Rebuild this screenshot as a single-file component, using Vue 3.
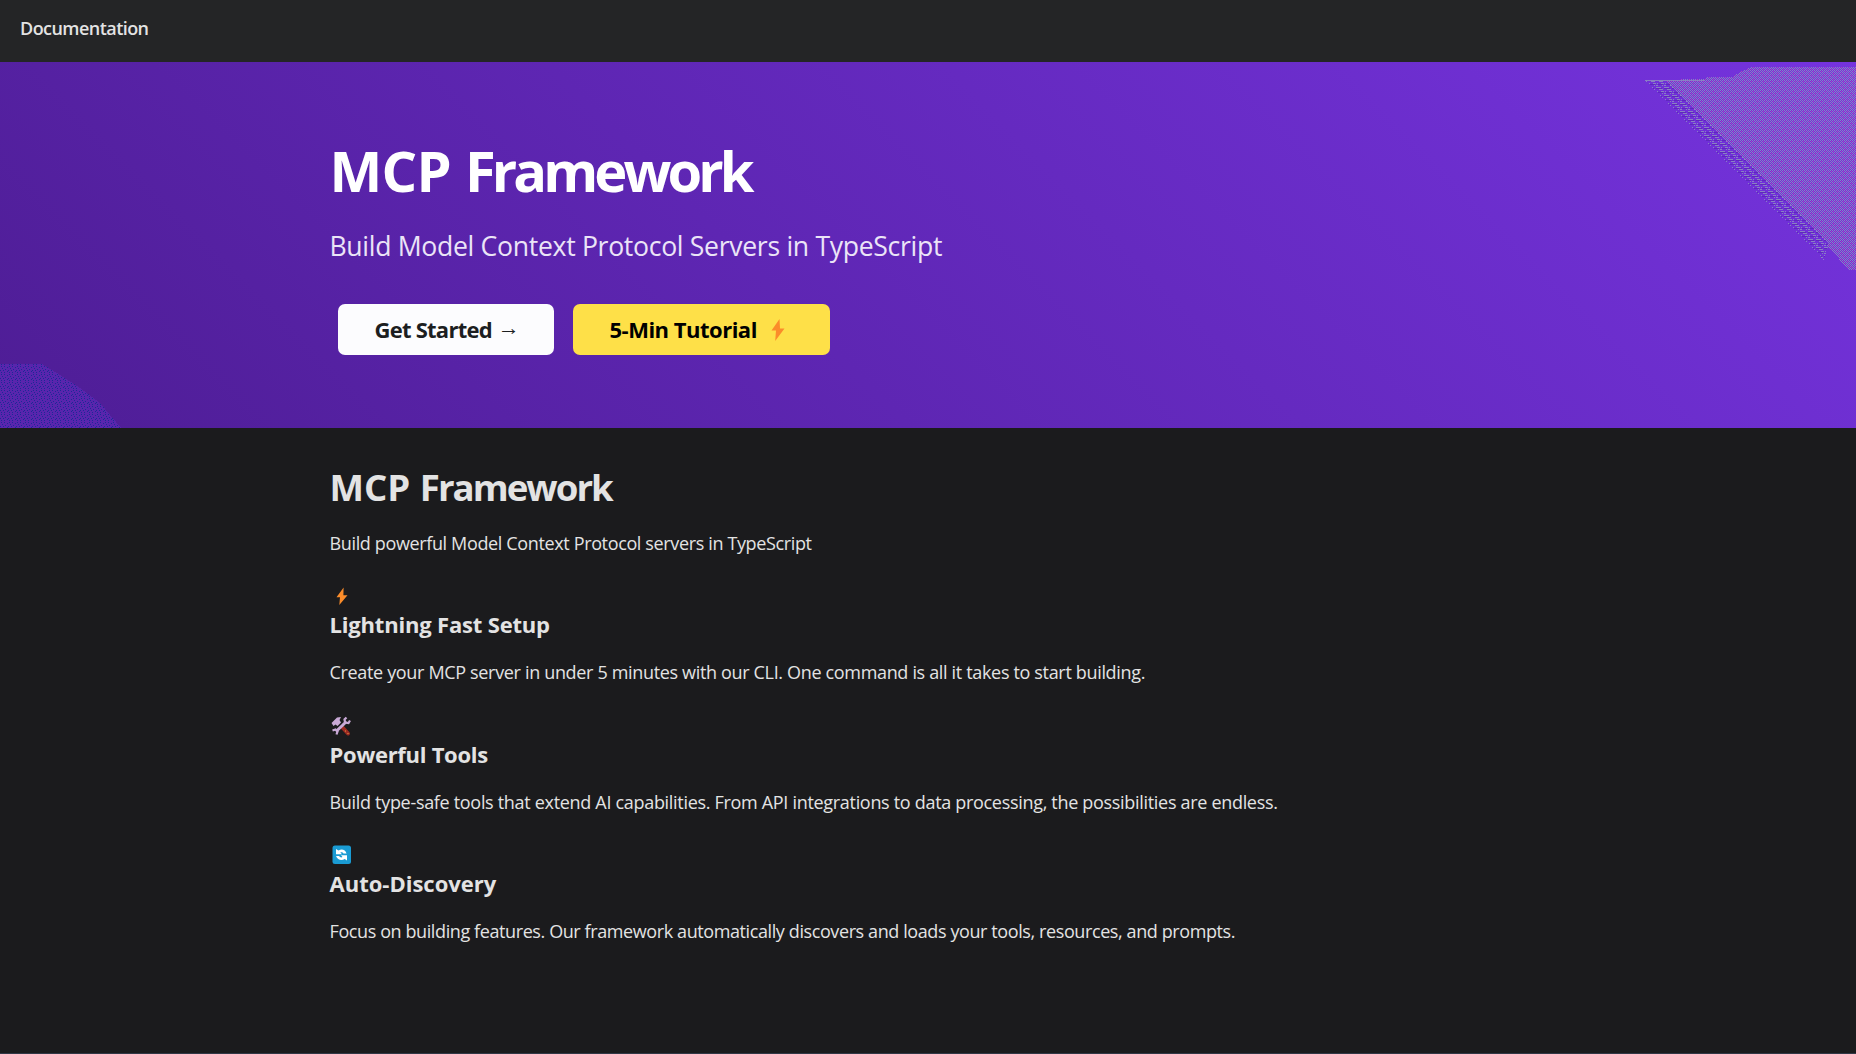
<template>
  <div class="page">
    <nav class="navbar">
      <a class="navbar-link">Documentation</a>
    </nav>

    <header class="hero">
      <svg class="hero-art" width="1856" height="366" shape-rendering="crispEdges">
        <defs>
          <pattern id="grain" width="8" height="6" patternUnits="userSpaceOnUse">
            <path fill="#8a7fc4" d="M0 0h1v1h-1zM2 0h1v1h-1zM4 0h1v1h-1zM6 0h1v1h-1zM1 1h1v1h-1zM5 1h1v1h-1zM0 2h1v1h-1zM2 2h1v1h-1zM4 2h1v1h-1zM6 2h1v1h-1zM1 3h1v1h-1zM3 3h1v1h-1zM7 3h1v1h-1zM0 4h1v1h-1zM2 4h1v1h-1zM4 4h1v1h-1zM6 4h1v1h-1zM3 5h1v1h-1zM5 5h1v1h-1zM7 5h1v1h-1z" />
            <path fill="#b246c0" d="M3 1h1v1h-1zM7 1h1v1h-1zM5 3h1v1h-1zM1 5h1v1h-1z" />
          </pattern>
          <pattern id="stitch" width="8" height="8" patternUnits="userSpaceOnUse">
            <path fill="#7030d8" d="M0 0h8v8h-8z" />
            <path fill="#8a7fc4" d="M0 1h5v1h-5zM3 3h4v1h-4zM1 5h1v1h-1zM5 5h3v1h-3zM0 7h2v1h-2zM6 7h1v1h-1z" />
            <path fill="#5f28bd" d="M0 2h6v1h-6zM2 6h5v1h-5z" />
          </pattern>
          <pattern id="dots" width="8" height="8" patternUnits="userSpaceOnUse">
            <path fill="#5925ad" d="M0 0h8v8h-8z" />
            <path fill="#1c2a96" d="M1 0h1v1h-1zM4 0h1v1h-1zM7 1h1v1h-1zM2 2h1v1h-1zM5 3h1v1h-1zM0 4h1v1h-1zM3 4h1v1h-1zM7 5h1v1h-1zM1 6h1v1h-1zM4 6h1v1h-1z" />
          </pattern>
        </defs>
        <path fill="url(#grain)" d="M1655 18L1706 17V15H1732L1740 10L1752 5H1856V208H1849L1830 187L1818 182Z" />
        <path fill="url(#stitch)" d="M1645 18H1665L1828 181L1824 198Z" />
        <path fill="#8a7fc4" d="M1645 18H1704V19H1645Z" />
        <path fill="url(#dots)" d="M0 302H42L60 313L80 326L100 341L121 366H0Z" />
      </svg>
      <div class="container">
        <h1 class="hero-title"><span class="caps">MCP </span>Framework</h1>
        <p class="hero-subtitle">Build Model Context Protocol Servers in TypeScript</p>
        <div class="buttons">
          <a class="button button-light">Get Started<span class="arrow">→</span></a>
          <a class="button button-yellow">
            <span>5-Min Tutorial</span>
            <svg class="button-bolt" width="14" height="22" viewBox="0 0 14 22">
              <path fill="#fb8c2a" d="M8.5 0L0.5 11.5H5L4.2 22L13.5 9.5H9Z" />
            </svg>
          </a>
        </div>
      </div>
    </header>

    <main class="container content">
      <h1 class="title"><span class="caps">MCP </span>Framework</h1>
      <p class="text intro">Build powerful Model Context Protocol servers in TypeScript</p>

      <section v-for="item in features" :key="item.title" class="feature" :class="item.icon">
        <div class="feature-icon">
          <svg v-if="item.icon === 'bolt'" width="24" height="24" viewBox="0 0 24 24">
            <path fill="#fb8c2a" d="M14.6 3.5L7.5 13.3H11L10.3 21L18.5 11.3H14.4Z" />
          </svg>
          <svg v-else-if="item.icon === 'tools'" width="24" height="24" viewBox="0 0 24 24">
            <path stroke="#9c2a22" stroke-width="4" stroke-linecap="round" d="M13.5 13.5L19 19.5" />
            <path fill="#c9a9d6" d="M2.5 9L8 3.5L12 3L10.5 6L12 8.5L8.5 12L6.5 10.5L4.5 12Z" />
            <path stroke="#c9a9d6" stroke-width="3" d="M7 17.5L17.5 7.5" />
            <path fill="none" stroke="#c9a9d6" stroke-width="2.2" d="M17.5 3.5L15.5 5.5L16 8.5L19.5 9L21 6.5M3.5 16.5L6.5 15.5L8.5 17.5L7.5 20.5" />
            <path fill="#e0a040" d="M16 16.5h1v1h-1zM18.5 19h1v1h-1z" />
          </svg>
          <svg v-else width="24" height="24" viewBox="0 0 24 24">
            <rect x="3.5" y="2.5" width="18.5" height="18.5" rx="2.5" fill="#1a9bd3" />
            <path fill="#fff" d="M7 6L9.500 7.500C12.500 5.500 16.500 6.500 17.500 10.500H14.500C13.500 9 12.500 9 11.300 9.500L13 11.300H7ZM18 17.500L15.700 16C12.500 18 8.500 17 7 13H10C11 14.500 12.500 14.700 13.500 14L12 12.200H18Z" />
          </svg>
        </div>
        <h3 class="feature-title">{{ item.title }}</h3>
        <p class="text">{{ item.text }}</p>
      </section>
    </main>
    <div class="footer-edge"></div>
  </div>
</template>

<script setup>
const features = [
  {
    icon: "bolt",
    title: "Lightning Fast Setup",
    text: "Create your MCP server in under 5 minutes with our CLI. One command is all it takes to start building.",
  },
  {
    icon: "tools",
    title: "Powerful Tools",
    text: "Build type-safe tools that extend AI capabilities. From API integrations to data processing, the possibilities are endless.",
  },
  {
    icon: "refresh",
    title: "Auto-Discovery",
    text: "Focus on building features. Our framework automatically discovers and loads your tools, resources, and prompts.",
  },
];
</script>

<style>
body {
  background: #1b1b1d;
}
</style>

<style scoped>
.page {
  display: flex;
  flex-direction: column;
  height: 1054px;
  overflow: hidden;
  background: #1b1b1d;
  color: #e3e3e3;
  font-family: "Open Sans", "Noto Sans", sans-serif;
  font-size: 18px;
  line-height: 28px;
}

h1,
h3,
p {
  margin: 0;
}

.navbar {
  height: 62px;
  box-sizing: border-box;
  padding: 14px 20px;
  background: #242526;
}

.navbar-link {
  font-weight: 600;
  letter-spacing: -0.55px;
}

.container {
  width: 1197px;
  margin: 0 auto;
}

.hero {
  position: relative;
  height: 366px;
  box-sizing: border-box;
  padding-top: 73px;
  background: linear-gradient(45deg, #4e1d95, #7533de);
}

.hero-art {
  position: absolute;
  top: 0;
  left: 0;
}

.hero-title {
  font-size: 56px;
  line-height: 70px;
  letter-spacing: -3.9px;
  color: #fff;
}

.hero-title .caps {
  letter-spacing: -0.7px;
}

.hero-subtitle {
  margin-top: 21px;
  font-size: 26.6px;
  line-height: 40px;
  letter-spacing: -0.31px;
  color: #ebe4f7;
}

.buttons {
  display: flex;
  gap: 19px;
  margin: 38px 0 0 8px;
}

.button {
  display: flex;
  align-items: center;
  height: 51px;
  box-sizing: border-box;
  padding: 0 0 2px 37px;
  border-radius: 7px;
  font-size: 22px;
  font-weight: 700;
  white-space: nowrap;
}

.button-light {
  width: 216px;
  background: #fcfcfe;
  color: #1c1e21;
  letter-spacing: -0.75px;
}

.button-yellow {
  width: 257px;
  background: #fee048;
  color: #000;
  letter-spacing: -0.5px;
}

.button-bolt {
  flex-shrink: 0;
  margin: 2px 0 0 14px;
}

.arrow {
  margin: -6px 0 0 6px;
  font-weight: 400;
}

.content {
  flex: 1;
  padding-top: 36px;
}

.title {
  font-size: 36.6px;
  line-height: 46px;
  letter-spacing: -1.95px;
}

.title .caps {
  letter-spacing: 0;
}

.intro {
  margin-top: 19px;
  letter-spacing: -0.36px;
}

.feature {
  margin-top: 25.4px;
}

.feature-icon {
  display: flex;
  align-items: center;
  height: 28px;
  margin-left: -1px;
}

.feature-title {
  margin-bottom: 20px;
  font-size: 22px;
  line-height: 28px;
}

.bolt {
  letter-spacing: -0.335px;
}

.bolt .feature-title {
  letter-spacing: -0.18px;
}

.tools {
  letter-spacing: -0.31px;
}

.tools .feature-title {
  letter-spacing: -0.28px;
}

.refresh {
  letter-spacing: -0.4px;
}

.refresh .feature-title {
  letter-spacing: 0;
}

.footer-edge {
  height: 1px;
  background: #303846;
}
</style>
